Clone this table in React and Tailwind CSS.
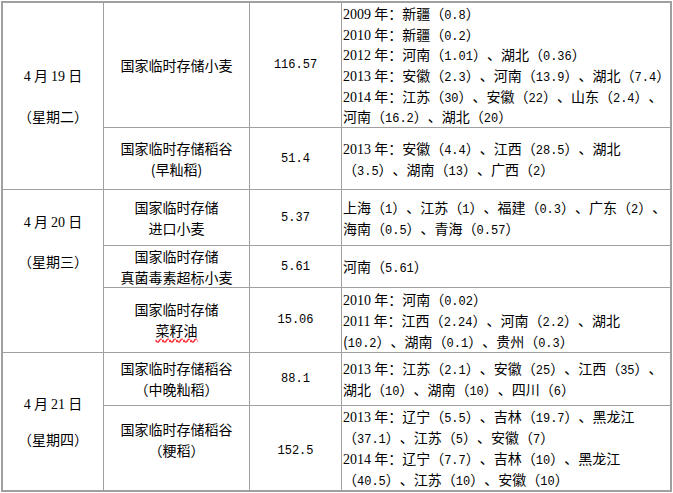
import React from 'react';

// numbers followed by a space (years, dates) are set in a Times-like face,
// the rest (amounts) in a narrow mono face like SimSun's half-width digits
function fmt(s) {
  const parts = s.split(/(\d+(?:\.\d+)?)/);
  return parts.map((p, i) => {
    if (!/^\d/.test(p)) return p;
    const next = parts[i + 1] || '';
    if (next.startsWith(' ')) {
      return (
        <span key={i} className="font-['Liberation_Serif',serif] text-[14px] leading-none">
          {p}
        </span>
      );
    }
    return (
      <span key={i} className="font-['Liberation_Mono',monospace] text-[12px] leading-none">
        {p}
      </span>
    );
  });
}

function DateCell({ date, week, className }) {
  return (
    <div className={`bg-white flex flex-col items-center ${className}`}>
      <div className="whitespace-nowrap h-[21px] leading-[21px]">{fmt(date)}</div>
      <div className="whitespace-nowrap h-[21px] leading-[21px]">{week}</div>
    </div>
  );
}

function NameCell({ lines, className = '' }) {
  return (
    <div className={`bg-white flex flex-col items-center justify-center text-center ${className}`}>
      {lines.map((l, i) => (
        <div key={i} className="whitespace-nowrap h-[21px] leading-[21px]">
          {l}
        </div>
      ))}
    </div>
  );
}

function NumCell({ value, className = '' }) {
  return (
    <div className={`bg-white flex items-center justify-center ${className}`}>
      {fmt(value)}
    </div>
  );
}

function RegionCell({ lines, line = 'h-[21px] leading-[21px]' }) {
  return (
    <div className="bg-white flex flex-col justify-center pl-px">
      {lines.map((l, i) => (
        <div key={i} className={`whitespace-nowrap shrink-0 ${line}`}>
          {fmt(l)}
        </div>
      ))}
    </div>
  );
}

export default function App() {
  return (
    <div className="w-[673px] h-[493px] bg-white font-['Noto_Sans_CJK_SC',sans-serif] text-[14px] text-black [text-spacing-trim:space-all]">
      <div className="ml-px mt-px w-[671px] h-[491px] border-2 border-[#a0a0a0] bg-[#a0a0a0] grid grid-cols-[100px_145px_91px_328px] grid-rows-[124px_61px_55px_41px_64px_52px_84px] gap-px">
        {/* 4月19日 */}
        <DateCell date="4 月 19 日" week="（星期二）" className="row-span-2 pt-[62px] gap-[20px]" />
        <NameCell lines={['国家临时存储小麦']} />
        <NumCell value="116.57" />
        <RegionCell
          line="h-[20.6px] leading-[20.6px]"
          lines={[
            '2009 年：新疆（0.8）',
            '2010 年：新疆（0.2）',
            '2012 年：河南（1.01）、湖北（0.36）',
            '2013 年：安徽（2.3）、河南（13.9）、湖北（7.4）',
            '2014 年：江苏（30）、安徽（22）、山东（2.4）、',
            '河南（16.2）、湖北（20）',
          ]}
        />
        <NameCell lines={['国家临时存储稻谷', '(早籼稻)']} />
        <NumCell value="51.4" />
        <RegionCell lines={['2013 年：安徽（4.4）、江西（28.5）、湖北', '（3.5）、湖南（13）、广西（2）']} />

        {/* 4月20日 */}
        <DateCell date="4 月 20 日" week="（星期三）" className="row-span-3 pt-[21px] gap-[19px]" />
        <NameCell lines={['国家临时存储', '进口小麦']} />
        <NumCell value="5.37" />
        <RegionCell lines={['上海（1）、江苏（1）、福建（0.3）、广东（2）、', '海南（0.5）、青海（0.57）']} />
        <NameCell lines={['国家临时存储', '真菌毒素超标小麦']} />
        <NumCell value="5.61" />
        <RegionCell lines={['河南（5.61）']} />
        <NameCell
          lines={[
            '国家临时存储',
            <span key="c" className="underline decoration-wavy decoration-red-500 underline-offset-2">
              菜籽油
            </span>,
          ]}
        />
        <NumCell value="15.06" />
        <RegionCell
          lines={['2010 年：河南（0.02）', '2011 年：江西（2.24）、河南（2.2）、湖北', '(10.2）、湖南（0.1）、贵州（0.3）']}
        />

        {/* 4月21日 */}
        <DateCell date="4 月 21 日" week="（星期四）" className="row-span-2 pt-[40px] gap-[15px]" />
        <NameCell lines={['国家临时存储稻谷', '（中晚籼稻）']} />
        <NumCell value="88.1" />
        <RegionCell lines={['2013 年：江苏（2.1）、安徽（25）、江西（35）、', '湖北（10）、湖南（10）、四川（6）']} />
        <NameCell lines={['国家临时存储稻谷', '（粳稻）']} className="pb-[17px]" />
        <NumCell value="152.5" className="pt-[5px]" />
        <RegionCell
          lines={[
            '2013 年：辽宁（5.5）、吉林（19.7）、黑龙江',
            '（37.1）、江苏（5）、安徽（7）',
            '2014 年：辽宁（7.7）、吉林（10）、黑龙江',
            '（40.5）、江苏（10）、安徽（10）',
          ]}
        />
      </div>
    </div>
  );
}
